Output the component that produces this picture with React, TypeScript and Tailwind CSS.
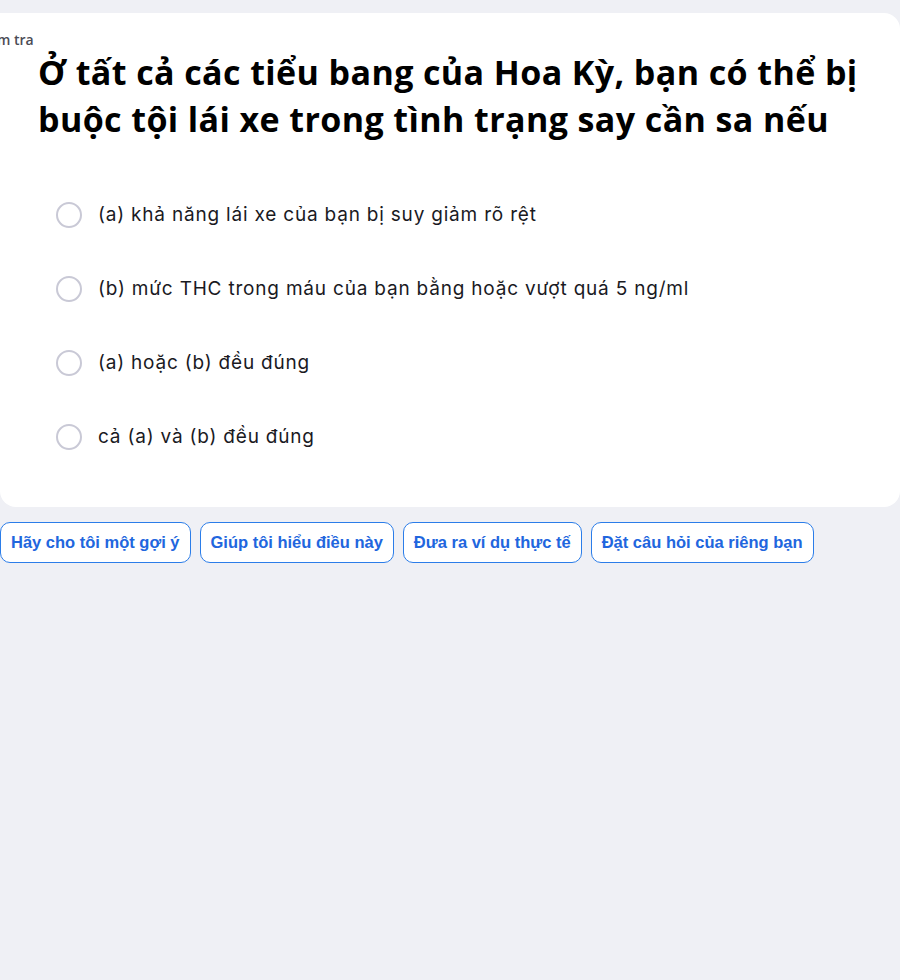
const options = [
  '(a) khả năng lái xe của bạn bị suy giảm rõ rệt',
  '(b) mức THC trong máu của bạn bằng hoặc vượt quá 5 ng/ml',
  '(a) hoặc (b) đều đúng',
  'cả (a) và (b) đều đúng',
]

const prompts = [
  'Hãy cho tôi một gợi ý',
  'Giúp tôi hiểu điều này',
  'Đưa ra ví dụ thực tế',
  'Đặt câu hỏi của riêng bạn',
]

export default function App() {
  return (
    <div className="min-h-[980px] w-[900px] overflow-hidden bg-[#eff0f5] pt-[13px] font-['Open_Sans',sans-serif]">
      <div className="relative h-[494px] w-[900px] rounded-tr-2xl rounded-b-2xl bg-white">
        <div className="ml-[-24px] pt-[19px] text-[14px] font-semibold leading-[16px] text-[#4b4b55]">Kiểm tra</div>
        <h1 className="mt-[1px] pl-[38px] pr-[20px] text-[34px] font-bold leading-[47px] tracking-[0.4px] text-black">
          Ở tất cả các tiểu bang của Hoa Kỳ, bạn có thể bị buộc tội lái xe trong tình trạng say cần sa nếu
        </h1>
        <div className="mt-[59px] flex flex-col gap-[48px] pl-[56px]">
          {options.map((o) => (
            <label key={o} className="flex h-[26px] items-center gap-[16px]">
              <span className="h-[26px] w-[26px] rounded-full border-2 border-[#c9c9d6] bg-white" />
              <span className="font-['Inter',sans-serif] text-[19px] leading-[26px] tracking-[0.8px] text-[#1a1a1f]">{o}</span>
            </label>
          ))}
        </div>
      </div>
      <div className="mt-[15px] flex gap-[9px] font-['Liberation_Sans',sans-serif]">
        {prompts.map((p) => (
          <button
            key={p}
            className="h-[41px] rounded-[10px] border border-[#2b7de9] bg-white px-[10px] text-[16.5px] font-bold text-[#2166de]"
          >
            {p}
          </button>
        ))}
      </div>
    </div>
  )
}
